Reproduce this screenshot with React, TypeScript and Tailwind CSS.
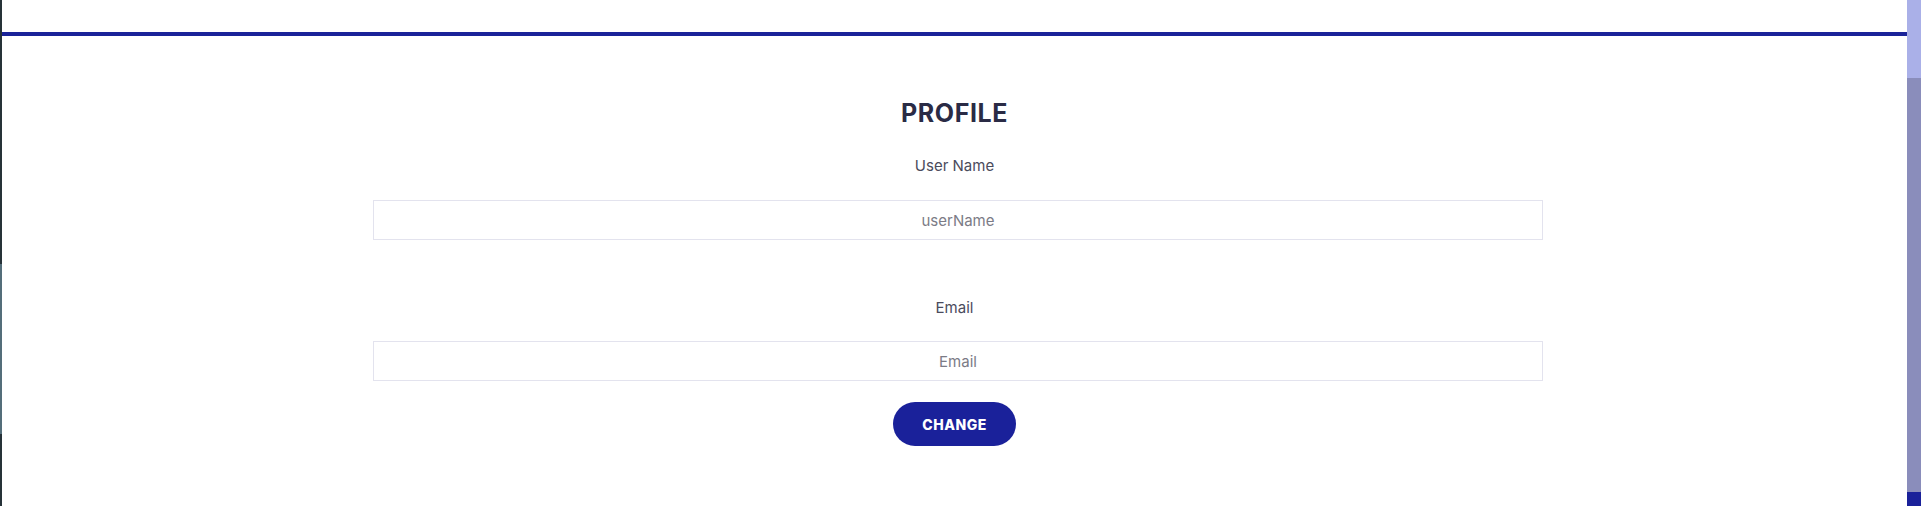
import { useState } from 'react';

const App = () => {
  const [userName, setUserName] = useState('');
  const [email, setEmail] = useState('');

  return (
    <div className="flex h-[506px] w-full overflow-hidden bg-white" style={{ fontFamily: 'Inter, "Noto Sans", sans-serif' }}>
      {/* edge of the window behind */}
      <div className="flex w-[2px] flex-col">
        <div className="h-[264px] bg-[#263238]" />
        <div className="h-[170px] bg-[#546e7a]" />
        <div className="flex-1 bg-[#263238]" />
      </div>

      <div className="flex flex-1 flex-col">
        <div className="mt-[32px] h-[4px] bg-[#1a2399]" />

        <div className="flex flex-col">
          <h1 className="mt-[62px] text-center text-[25px] leading-[30px] font-bold tracking-[0.6px] text-[#2a2b45]">PROFILE</h1>

          <label htmlFor="userName" className="mt-[28px] text-center text-[15px] leading-[20px] text-[#4b4b5c]">
            User Name
          </label>
          <input
            id="userName"
            value={userName}
            onChange={(e) => setUserName(e.target.value)}
            placeholder="userName"
            className="mt-[24px] ml-[371px] mr-[364px] h-[40px] border border-[#e3e3ee] text-center text-[15px] text-[#333] outline-none placeholder:text-[#7b7b86]"
          />

          <label htmlFor="email" className="mt-[58px] text-center text-[15px] leading-[20px] text-[#4b4b5c]">
            Email
          </label>
          <input
            id="email"
            value={email}
            onChange={(e) => setEmail(e.target.value)}
            placeholder="Email"
            className="mt-[23px] ml-[371px] mr-[364px] h-[40px] border border-[#e3e3ee] text-center text-[15px] text-[#333] outline-none placeholder:text-[#7b7b86]"
          />

          <div className="mt-[21px] flex justify-center">
            <button className="h-[44px] w-[123px] rounded-full bg-[#1a219a] text-[14px] font-extrabold tracking-[0.5px] text-white">
              CHANGE
            </button>
          </div>
        </div>
      </div>

      {/* scrollbar */}
      <div className="flex w-[14px] flex-col">
        <div className="h-[78px] bg-[#aab0e8]" />
        <div className="flex-1 bg-[#8a8dbb]" />
        <div className="h-[14px] bg-[#1a219a]" />
      </div>
    </div>
  );
};

export default App;
